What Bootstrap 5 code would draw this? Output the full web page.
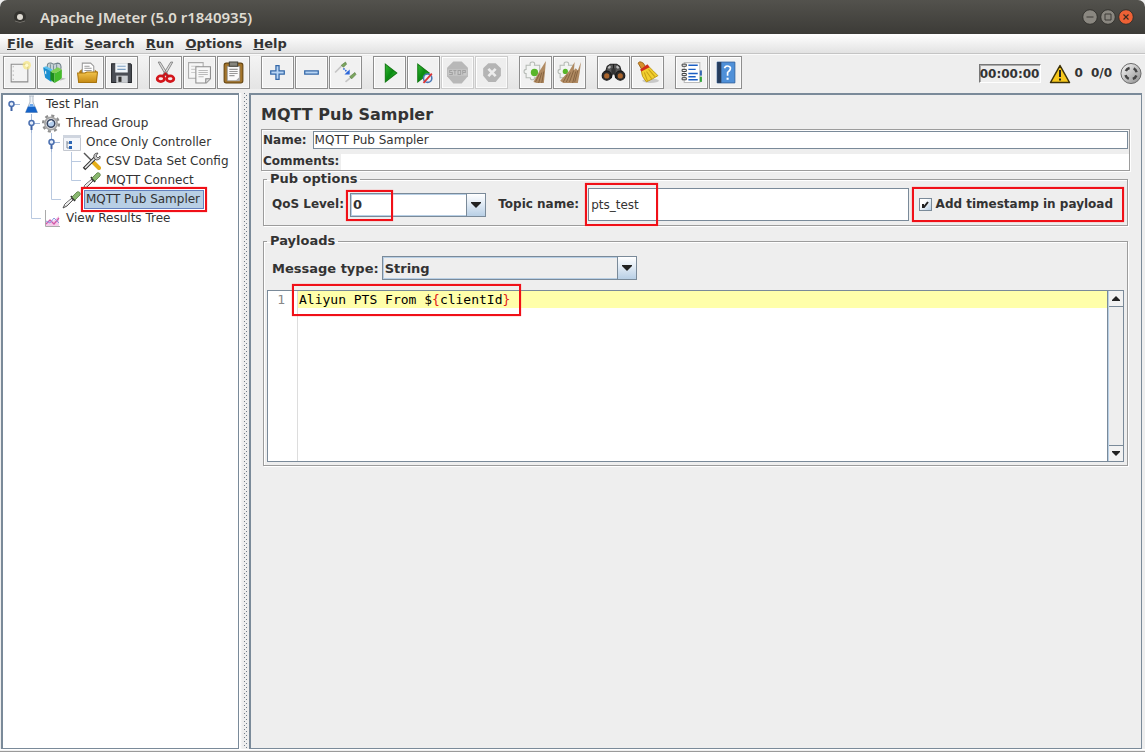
<!DOCTYPE html>
<html lang="en">
<head>
<meta charset="utf-8">
<meta name="viewport" content="width=device-width, initial-scale=1">
<title>Apache JMeter (5.0 r1840935)</title>
<link href="https://cdn.jsdelivr.net/npm/bootstrap@5.3.0/dist/css/bootstrap.min.css" rel="stylesheet">
<style>
:root{--edge:#7a8a99;--etch:#9c9c9c;--ink:#333;--mark:#f01018}
body{background:#eee;color:var(--ink);font:12px/17px "DejaVu Sans",sans-serif}
b,label,legend{font-weight:700}
svg{display:block;flex:none}
/* window title */
.titlebar{height:34px;background:linear-gradient(#53524d,#3c3b37);border-radius:7px 7px 0 0;color:#dfdbd2;padding:0 11px 0 13px}
.titlebar h1{font:600 15px/20px "Noto Sans",sans-serif;margin:0 0 0 13px}
.winbtn{border:0;background:none;padding:0;margin-left:2px}
/* menu */
.menubar{height:20px;background:linear-gradient(#fff,#e2e2e2);border-bottom:1px solid #c4c4c4;padding:1px 7px 0;gap:11px;font-size:13px}
.menubar a{color:var(--ink);font-weight:700;text-decoration:none;line-height:18px}
/* toolbar */
.tools{background:#eee;border-top:1px solid #fafafa;padding:1px 3px 4px 3px}
.toolstrip{gap:11px;background:linear-gradient(#f4f4f4,#e4e4e4)}
.toolset{gap:1px}
.tool{width:33px;height:33px;padding:3px;border:1px solid #8e8e8e;background:#f1f1f1;box-shadow:inset 1px 1px #fff,inset -1px -1px #fafafa;border-radius:0}
.tool:disabled{border-color:#ccc;background:#eee}
.tool svg{width:25px;height:25px}
.timer{width:62px;height:19px;border:1px solid;border-color:#777 #fff #fff #777;box-shadow:inset 1px 1px #aaa;background:#eee;padding:0;color:var(--ink);font-weight:700;text-align:center}
.gauge{gap:8px;padding-top:2px}
/* panes */
.tree{width:238px;border:solid var(--edge);border-width:2px 1px 1px 2px;background:#fff;margin-left:1px;flex:none}
.tree ul{padding:0;margin:0;list-style:none}
.tree li{height:19px;display:flex;align-items:center}
.tree li a{color:var(--ink);text-decoration:none;margin-left:5px;white-space:nowrap}
.tree li a.chosen{background:#b8cfe5;border:1px solid #6382bf;padding:0 3px 0 1px;margin-left:3px;position:relative}
.split{width:10px;flex:none;background:linear-gradient(90deg,#fff 1px,#eee 3px)}
.split i{display:block;height:100%;width:4px;margin-left:5px;background:url("data:image/svg+xml,%3Csvg xmlns='http://www.w3.org/2000/svg' width='4' height='4'%3E%3Cpath d='M0 0h1v1H0zM2 2h1v1H2z' fill='%236f7b88'/%3E%3C/svg%3E")}
.pane{border:solid var(--edge);border-width:2px 1px 1px 2px;margin-right:3px;padding:10px 11px 10px 10px;min-width:0}
.pane h2{font-size:16px;line-height:20px;font-weight:700;margin:0 0 4px}
.etched{border:1px solid var(--etch);box-shadow:1px 1px #fff,inset 1px 1px #fff}
.flat{border:1px solid var(--edge);background:#fff;color:var(--ink);border-radius:0;padding:0 1px;outline:0;min-width:0}
.namebox{padding:1px 0 0 1px}
.namebox .flat{height:18px;margin:0 1px 0 6px}
.namebox .plain{border:0;height:16px;margin:0 0 0 2px}
fieldset.etched{margin:0 2px 7px}
fieldset legend{float:none;width:auto;font-size:13px;line-height:16px;padding:0 3px;margin:0 0 0 3px}
.optrow{padding:0 3px 3px 8px}
.msgrow{padding:7px 3px 10px 8px;font-size:13px}
.combo{display:flex;border:1px solid var(--edge);height:24px;position:relative;box-shadow:inset 0 0 0 1px #b8cfe5;background:#eee;font-size:13px}
.combo.white{background:#fff;flex:0 0 16%;margin-left:6px}
.msgcombo{width:30%;margin-left:3px}
.combo select{appearance:none;border:0;background:none;flex:1;color:var(--ink);font-weight:700;padding:0 2px;outline:0;min-width:0}
.combo span{width:19px;border-left:1px solid var(--edge);background:linear-gradient(#fff,#dde8f3 50%,#b8cfe5);display:flex;align-items:center;justify-content:center;pointer-events:none}
.topiclabel{margin:0 9px 0 12px;white-space:nowrap}
.topicwrap{margin-right:3px}
.topicwrap .flat{height:33px;padding:0 2px}
.tick{appearance:none;width:13px;height:13px;border:1px solid var(--edge);background:linear-gradient(135deg,#fff 30%,#b8cfe5);margin:0}
.tick:checked{background:url("data:image/svg+xml,%3Csvg xmlns='http://www.w3.org/2000/svg' viewBox='0 0 11 11'%3E%3Cpath d='M3 5v3h1l4-5' fill='none' stroke='%23222' stroke-width='2'/%3E%3C/svg%3E"),linear-gradient(135deg,#fff 30%,#b8cfe5)}
/* red call-outs laid over the controls */
.callout{position:absolute;border:2px solid var(--mark);box-shadow:0 0 1px #f66;pointer-events:none}
.c-tree{inset:-4px}
.c-qos{inset:-4px auto -5px -5px;width:47px}
.c-topic{inset:-5px auto -5px -3px;width:73px}
.c-stamp{inset:0}
.c-code{inset:-7px auto -8px -6px;width:229px}
.stamp{position:relative;height:35px;padding:0 11px 0 7px;gap:4px;white-space:nowrap}
.editor{border:1px solid var(--edge);background:#fff;height:172px;font:13px/17px "DejaVu Sans Mono",monospace;margin:0 3px 3px}
.gutter{width:30px;border-right:1px solid #ddd;color:#888;text-align:right;padding-right:12px}
.code{min-width:0;color:#000}
.codeline{background:#ffffaa;padding-left:1px;height:17px;position:relative}
.brace{color:#e0201a}
.scroller{width:16px;border-left:1px solid var(--edge);background:#eee;box-shadow:inset 1px 0 #b8cfe5}
.scroller button{height:16px;border:0;border-bottom:1px solid var(--edge);background:#f2f2f2;padding:0 0 0 3px;margin-left:1px}
.scroller button:last-child{border-bottom:0;border-top:1px solid var(--edge)}
.bottomline{height:3px;border-top:1px solid #fff;border-bottom:1px solid #9a9a9a}
</style>
</head>
<body class="d-flex flex-column min-vh-100">
<svg width="0" height="0" class="position-absolute" aria-hidden="true">
<defs>
<linearGradient id="gGreen" x2="1" y2="1"><stop stop-color="#3b3"/><stop offset=".5" stop-color="#0a8a12"/><stop offset="1" stop-color="#3fd13f"/></linearGradient>
<linearGradient id="gFold" x2="0" y2="1"><stop stop-color="#f3c44c"/><stop offset="1" stop-color="#c58a13"/></linearGradient>
<linearGradient id="gSteel" x2="1" y2="1"><stop stop-color="#fafafa"/><stop offset="1" stop-color="#8b8b8b"/></linearGradient>
<symbol id="t-handle" viewBox="0 0 20 19"><path d="M10 9.5h9" stroke="#a3b8d8"/><path d="M10.500 9v7" stroke="#3f62a5" stroke-width="2"/><circle cx="10.500" cy="9" r="2.500" fill="#e6eefa" stroke="#4a6fb0" stroke-width="1.500"/></symbol>
<symbol id="t-handle2" viewBox="0 0 20 19"><path d="M10.500 0v19M10 9.500h9" stroke="#a3b8d8"/><path d="M10.500 9v7" stroke="#3f62a5" stroke-width="2"/><circle cx="10.500" cy="9" r="2.500" fill="#e6eefa" stroke="#4a6fb0" stroke-width="1.500"/></symbol>
<symbol id="t-bar" viewBox="0 0 20 19"><path d="M10.500 0v19" stroke="#b9c9e0"/></symbol>
<symbol id="t-tee" viewBox="0 0 20 19"><path d="M10.500 0v19M10 9.500h10" stroke="#b9c9e0"/></symbol>
<symbol id="t-elbow" viewBox="0 0 20 19"><path d="M10.500 0v9.500h9.500" stroke="#b9c9e0" fill="none"/></symbol>
<symbol id="i-gear" viewBox="0 0 20 20"><circle cx="10" cy="10" r="8.300" fill="none" stroke="#8f8f8f" stroke-width="2.600" stroke-dasharray="3.200 3.320"/><circle cx="10" cy="10" r="6.400" fill="#ececec" stroke="#a5a5a5" stroke-width="1.800"/><circle cx="10" cy="10" r="4" fill="#b5cfee" stroke="#3a4660" stroke-width="1.600"/><path d="M8 9.500a3 3 0 0 1 3-2" stroke="#fff" stroke-width="1.400" fill="none"/></symbol>
<symbol id="i-drop" viewBox="0 0 20 19"><path d="M2 18l2-4 7-6 1 2-6 6z" fill="#ddd" stroke="#444" stroke-width=".9"/><path d="M4 15l6-5" stroke="#fff"/><path d="M10 6l4 5" stroke="#333" stroke-width="1.800"/><path d="M11 7l5-5c2-1 4 1 3 3l-5 5z" fill="#8ab870" stroke="#54783f" stroke-width=".8"/></symbol>
<symbol id="i-bin" viewBox="0 0 24 24"><path d="M3 16l3-10 3-2h3v4l-2 9zM21 16l-3-10-3-2h-3v4l2 9z" fill="#555" stroke="#1d1d1d"/><path d="M7 8l2-2M15 6l2 2" stroke="#bbb" stroke-width="2"/><path d="M10 8h4v6h-4z" fill="#333"/><circle cx="5.500" cy="15" r="4.400" fill="#2b2b2b" stroke="#111"/><circle cx="18.500" cy="15" r="4.400" fill="#2b2b2b" stroke="#111"/><circle cx="5.500" cy="15.300" r="2.500" fill="#a9642c"/><circle cx="18.500" cy="15.300" r="2.500" fill="#a9642c"/></symbol>
<symbol id="i-puzzle" viewBox="0 0 24 24"><path d="M3 5h4q-1-3 2-3t2 3h5v12h-5q0 2-2 2t-2-2H3v-4q-2 0-2-2t2-2z" fill="#f2f4f2" stroke="#b5bab5"/></symbol>
<symbol id="i-arrow" viewBox="0 0 10 6"><path d="M0 0h10v1L5 6 0 1z" fill="#222"/></symbol>
</defs></svg>

<header class="titlebar d-flex align-items-center">
 <svg width="14" height="20" viewBox="0 0 14 20"><circle cx="7" cy="10" r="6" fill="#34332f"/><path d="M2 14q5 3 10 0" stroke="#73716b" fill="none"/><circle cx="7" cy="10" r="3" fill="#dedad2"/></svg>
 <h1 class="me-auto">Apache JMeter (5.0 r1840935)</h1>
 <button class="winbtn" aria-label="Minimize"><svg width="16" height="16" viewBox="0 0 16 16"><circle cx="8" cy="8" r="7.300" fill="#8a8780" stroke="#33322e"/><path d="M4.500 8h7" stroke="#3c3b37"/></svg></button>
 <button class="winbtn" aria-label="Maximize"><svg width="16" height="16" viewBox="0 0 16 16"><circle cx="8" cy="8" r="7.300" fill="#8a8780" stroke="#33322e"/><path d="M5 5h6v6H5z" fill="none" stroke="#3c3b37"/></svg></button>
 <button class="winbtn" aria-label="Close"><svg width="16" height="16" viewBox="0 0 16 16"><circle cx="8" cy="8" r="7.300" fill="#ee6135" stroke="#33322e"/><path d="M5.500 5.500l5 5m0-5l-5 5" stroke="#3c2b20" stroke-width="1.200"/></svg></button>
</header>

<nav class="menubar d-flex">
 <a href="#"><u>F</u>ile</a><a href="#"><u>E</u>dit</a><a href="#"><u>S</u>earch</a><a href="#"><u>R</u>un</a><a href="#"><u>O</u>ptions</a><a href="#"><u>H</u>elp</a>
</nav>

<div class="tools d-flex align-items-center">
 <div class="toolstrip d-flex me-auto">
  <div class="toolset d-flex">
   <button class="tool" aria-label="New"><svg viewBox="0 0 24 24"><path d="M4 4h16v17H4z" fill="#f3f3f3" stroke="#8c8c8c"/><path d="M6 6v13" stroke="#aaa" stroke-dasharray="1 3"/><circle cx="19" cy="5" r="4" fill="#f6e67c" opacity=".7"/><circle cx="19" cy="5" r="1.600" fill="#fffbd0"/></svg></button>
   <button class="tool" aria-label="Templates"><svg viewBox="0 0 24 24"><path d="M6 6q0-4 4-3l2 1 4-1q4 0 3 6v4H6z" fill="#c9d3d7" stroke="#71838a"/><path d="M9 4v6M12 5v5M15 4v5" stroke="#7b929a"/><path d="M2 7l8 3v11l-6-4z" fill="#1b8fd0"/><path d="M2 7l3-1 6 3-1 2z" fill="#5cc0ee"/><path d="M4 10l1 1v3l-1-1z" fill="#fff"/><path d="M9 11l4 2v9l-4-3z" fill="#1c8a1c"/><path d="M13 13l7-4v9l-7 4z" fill="#45bb2a"/><path d="M9 11l7-4 4 2-7 4z" fill="#7ed052"/><path d="M20 17l4 1-6 2z" fill="#bbb"/></svg></button>
   <button class="tool" aria-label="Open"><svg viewBox="0 0 24 24"><path d="M4 11l2-2h5v4h8V9l2 2v10H4z" fill="#b77d14"/><path d="M7 3h8l3 3v9H7z" fill="#fff" stroke="#999"/><path d="M9 6h5M9 8h7M9 10h7" stroke="#999"/><path d="M2.500 12.500h7l2-1h10v1l-1 9h-17z" fill="url(#gFold)" stroke="#a8740e"/></svg></button>
   <button class="tool" aria-label="Save"><svg viewBox="0 0 24 24"><path d="M2.500 3.500h18l1 1v17h-19z" fill="#4b4e55" stroke="#25272b"/><path d="M6 3h12v9H6z" fill="#f0f5f9"/><path d="M8 6h8M8 9h8" stroke="#7da0c4"/><path d="M7 15h11v7H7z" fill="#c9ccd0"/><path d="M9 16h3v5H9z" fill="#333"/></svg></button>
  </div>
  <div class="toolset d-flex">
   <button class="tool" aria-label="Cut"><svg viewBox="0 0 24 24"><path d="M5 2l2 0 8 13-2 1zM19 2l-2 0-8 13 2 1z" fill="#dedede" stroke="#777" stroke-width=".8"/><ellipse cx="7.500" cy="18" rx="3.500" ry="2.700" fill="#f4eaea" stroke="#d3151b" stroke-width="2.600"/><ellipse cx="16.500" cy="18" rx="3.500" ry="2.700" fill="#f4eaea" stroke="#d3151b" stroke-width="2.600"/><path d="M9 16l3-3 3 3" stroke="#c4151b" stroke-width="2" fill="none"/></svg></button>
   <button class="tool" aria-label="Copy"><svg viewBox="0 0 24 24"><path d="M1.500 2.500h14v15h-14z" fill="#f7f7f7" stroke="#aaa"/><path d="M4 6h8M4 9h4M4 12h4" stroke="#ccc"/><path d="M8.500 6.500h14V18l-4 4h-10z" fill="#f7f7f7" stroke="#8c8c8c"/><path d="M11 10h9M11 12h9M11 14h9M11 16h5" stroke="#bbb"/><path d="M22 18h-4v4" fill="#ddd" stroke="#888"/></svg></button>
   <button class="tool" aria-label="Paste"><svg viewBox="0 0 24 24"><rect x="3" y="3" width="18" height="19" rx="2" fill="#a3742a" stroke="#63430e"/><path d="M6 6h12v14H6z" fill="#fafafa" stroke="#888" stroke-width=".7"/><path d="M8 9h8M8 11h8M8 13h8M8 15h5" stroke="#999"/><path d="M8 2h8v4H8z" fill="#85857d" stroke="#44443d"/><path d="M18 16l-4 4h4z" fill="#aaa"/></svg></button>
  </div>
  <div class="toolset d-flex">
   <button class="tool" aria-label="Expand all"><svg viewBox="0 0 24 24"><path d="M10.500 5.500h3v5h5v3h-5v5h-3v-5h-5v-3h5z" fill="#b8d5f4" stroke="#3468a8" stroke-width="1.200"/></svg></button>
   <button class="tool" aria-label="Collapse all"><svg viewBox="0 0 24 24"><path d="M5.500 10.500h13v3h-13z" fill="#b8d5f4" stroke="#3468a8" stroke-width="1.200"/></svg></button>
   <button class="tool" aria-label="Toggle"><svg viewBox="0 0 24 24"><path d="M2 12l7-7" stroke="#c5c5c5" stroke-width="1.600"/><path d="M8 5l4-3 1 2-3 3z" fill="#7ba55d" stroke="#54783f" stroke-width=".6"/><path d="M12 21l5-4" stroke="#c5c5c5" stroke-width="1.600"/><path d="M16 16l5-4 1 2-4 4z" fill="#7ba55d" stroke="#54783f" stroke-width=".6"/><path d="M10 8l4 4" stroke="#2b66d9" stroke-width="1.500" stroke-dasharray="1.500 1"/><path d="M16 14h-5l5-5z" fill="#2b66d9"/></svg></button>
  </div>
  <div class="toolset d-flex">
   <button class="tool" aria-label="Start"><svg viewBox="0 0 24 24"><path d="M8 4l11 8.500-11 8.500z" fill="url(#gGreen)" stroke="#157a15"/></svg></button>
   <button class="tool" aria-label="Start no pauses"><svg viewBox="0 0 24 24"><path d="M6.500 4l11 8.500-11 8.500z" fill="url(#gGreen)" stroke="#157a15"/><circle cx="16" cy="17.500" r="4" fill="#e9eef8" stroke="#4a78b5" stroke-width="1.500"/><path d="M12 22l8-9" stroke="#d33" stroke-width="1.700"/></svg></button>
   <button class="tool" disabled aria-label="Stop"><svg viewBox="0 0 24 24"><path d="M8 1.500h8l6 6v8l-6 7H8l-6-7v-8z" fill="#b8b8b8"/><path d="M3 9h18v6H3z" fill="#c8c8c8"/><path d="M7 10H4.500v2H7v2H4M8 10h3M9.500 10v4M12.500 10h2.500v4h-2.500zM17 14v-4h2.500v2H17" fill="none" stroke="#a2a2a2"/></svg></button>
   <button class="tool" disabled aria-label="Shutdown"><svg viewBox="0 0 24 24"><path d="M9 3h7l5 5v7l-5 6H9l-5-6V8z" fill="#b4b4b4"/><path d="M9 8.500l7 7m0-7l-7 7" stroke="#ececec" stroke-width="2.500"/></svg></button>
  </div>
  <div class="toolset d-flex">
   <button class="tool" aria-label="Clear"><svg viewBox="0 0 24 24"><use href="#i-puzzle"/><circle cx="11" cy="12" r="3.500" fill="#58b62a"/><path d="M22 1l-7 11-5 9 3 1h7q1-9 2-21z" fill="#b08a62"/><path d="M16 13l-4 8M18 12l-3 10M20 11l-2 11" stroke="#7d5c39" stroke-width=".8"/></svg></button>
   <button class="tool" aria-label="Clear all"><svg viewBox="0 0 24 24"><use href="#i-puzzle"/><circle cx="8" cy="11" r="2.500" fill="#58b62a"/><path d="M17 2l-5 8-9 10 3 2h14q2-9 3-20l-3 8-2-2-2 2z" fill="#b08a62"/><path d="M10 14l-4 7M13 12l-4 9M16 10l-4 11M18 11l-3 11M20 10l-3 11" stroke="#7d5c39" stroke-width=".8"/></svg></button>
  </div>
  <div class="toolset d-flex">
   <button class="tool" aria-label="Search"><svg viewBox="0 0 24 24"><use href="#i-bin"/></svg></button>
   <button class="tool" aria-label="Reset search"><svg viewBox="0 0 24 24"><ellipse cx="15" cy="20" rx="8" ry="2" fill="#c8c8c8"/><path d="M3 3q1-2 3-1l2 1 3 5-4 2z" fill="#d7902c" stroke="#8f5b12" stroke-width=".8"/><path d="M6 10l7-4q5 5 9 9l-5 3-6 3q-5-5-5-11z" fill="#f2cf2e" stroke="#b58f10" stroke-width=".8"/><path d="M9 12l3 8M11 11l5 7M13 9l6 7" stroke="#c6a016"/><path d="M5 9l7-5 2 3-8 4z" fill="#d12b1c"/></svg></button>
  </div>
  <div class="toolset d-flex">
   <button class="tool" aria-label="Function helper"><svg viewBox="0 0 24 24"><path d="M5 2.500h15v19H5z" fill="#fff" stroke="#bbb"/><path d="M9 5h9M9 9h7M9 13h9M9 16h7M9 19h9" stroke="#1c5fc4" stroke-width="1.400"/><path d="M3 4h4v2H3zM3 9h4v2H3zM3 13h4v2H3zM3 17h4v2H3z" fill="#fff" stroke="#333" stroke-width=".9"/><path d="M20 10h2v5h-2z" fill="#3767b0"/><path d="M20 16h2v5h-2z" fill="#32a53a"/></svg></button>
   <button class="tool" aria-label="Help"><svg viewBox="0 0 24 24"><path d="M4 2h17v20H4z" fill="#4f90d8" stroke="#2a5d9b" stroke-width=".8"/><path d="M4 2h4v20H4z" fill="#273d5c"/><path d="M11 8q1-3 4-2 3 1 1 4l-2 2v3" fill="none" stroke="#fff" stroke-width="1.600"/><path d="M13 17h2v2h-2z" fill="#fff"/></svg></button>
  </div>
 </div>
 <div class="gauge d-flex align-items-center">
  <input class="timer" value="00:00:00" readonly aria-label="Elapsed time">
  <div class="d-flex align-items-center gap-1">
   <svg width="22" height="20" viewBox="0 0 22 20"><path d="M11 1.500L20.500 18.500h-19z" fill="#f7c81c" stroke="#3d3208" stroke-width="1.500" stroke-linejoin="round"/><path d="M11 6v7M11 14.500v2" stroke="#222" stroke-width="2"/></svg>
   <b>0</b>
  </div>
  <b>0/0</b>
  <svg width="22" height="23" viewBox="0 0 23 23"><circle cx="11.500" cy="11.500" r="10.500" fill="url(#gSteel)" stroke="#666"/><circle cx="11.500" cy="11.500" r="6" fill="none" stroke="#444" stroke-width="2.600" stroke-dasharray="5 4.420" stroke-dashoffset="-2.200"/></svg>
 </div>
</div>

<main class="d-flex flex-grow-1">
 <nav class="tree" aria-label="Test plan">
  <ul>
   <li><svg width="18" height="19" viewBox="2 0 18 19"><use href="#t-handle" width="20" height="19"/></svg><svg width="20" height="19" viewBox="0 0 20 19"><path d="M8 1h5M9 1v6L4.500 17.500h12L12 7V1" fill="#edf2f7" stroke="#b2bcc8"/><path d="M7 11.500h7l2.500 6H4.500z" fill="#1463c8"/><path d="M9 9h3l1 3H8z" fill="#6da7ea"/></svg><a href="#">Test Plan</a></li>
   <li><svg width="18" height="19"></svg><svg width="20" height="19"><use href="#t-handle2"/></svg><svg width="20" height="19"><use href="#i-gear"/></svg><a href="#">Thread Group</a></li>
   <li><svg width="18" height="19"></svg><svg width="20" height="19"><use href="#t-bar"/></svg><svg width="20" height="19"><use href="#t-handle2"/></svg><svg width="20" height="19" viewBox="0 0 20 19"><path d="M2.500 2.500h17v15h-17z" fill="#f4f6fa" stroke="#c4c8d0"/><path d="M2 2h18v3H2z" fill="#cfd5df"/><path d="M6 8v7h3M6 10h3" stroke="#7a8797" fill="none"/><path d="M8 8h3v3H8zM8 13h3v3H8z" fill="#2a64b4"/></svg><a href="#">Once Only Controller</a></li>
   <li><svg width="18" height="19"></svg><svg width="20" height="19"><use href="#t-bar"/></svg><svg width="20" height="19"><use href="#t-bar"/></svg><svg width="20" height="19"><use href="#t-tee"/></svg><svg width="20" height="19" viewBox="0 0 20 19"><path d="M3 1l8 8" stroke="#555" stroke-width="1.500"/><path d="M12 10l6 6" stroke="#e5ae18" stroke-width="4" stroke-linecap="round"/><path d="M3 17L14 6" stroke="#333" stroke-width="3.500"/><path d="M4 16L14 6" stroke="#eee" stroke-width="1.600"/><path d="M17 1q-5 0-4 5l2 2q5 0 4-4l-2 2-2-2z" fill="#c9c9c9" stroke="#444" stroke-width=".8"/></svg><a href="#">CSV Data Set Config</a></li>
   <li><svg width="18" height="19"></svg><svg width="20" height="19"><use href="#t-bar"/></svg><svg width="20" height="19"><use href="#t-bar"/></svg><svg width="20" height="19"><use href="#t-elbow"/></svg><svg width="20" height="19"><use href="#i-drop"/></svg><a href="#">MQTT Connect</a></li>
   <li><svg width="18" height="19"></svg><svg width="20" height="19"><use href="#t-bar"/></svg><svg width="20" height="19"><use href="#t-elbow"/></svg><svg width="20" height="19"><use href="#i-drop"/></svg><a href="#" class="chosen">MQTT Pub Sampler<span class="callout c-tree"></span></a></li>
   <li><svg width="18" height="19"></svg><svg width="20" height="19"><use href="#t-elbow"/></svg><svg width="20" height="19" viewBox="0 0 20 19"><path d="M4.500 1v16.500H19" stroke="#aaa" fill="none"/><path d="M5 13l4-3 3 2 6-5v10H5z" fill="#f4cbe8"/><path d="M5 15l4-4 4 4 5-6" fill="none" stroke="#d158a8" stroke-width="1.200"/><path d="M5 12l4 2 4-5 5 5" fill="none" stroke="#8b9be0"/></svg><a href="#">View Results Tree</a></li>
  </ul>
 </nav>
 <div class="split"><i></i></div>
 <section class="pane flex-grow-1">
  <h2>MQTT Pub Sampler</h2>
  <div class="etched namebox">
   <div class="d-flex align-items-center"><label for="nm">Name:</label><input id="nm" class="flat flex-grow-1" value="MQTT Pub Sampler"></div>
   <div class="d-flex align-items-center mt-1"><label for="cm">Comments:</label><input id="cm" class="flat plain flex-grow-1"></div>
  </div>
  <fieldset class="etched">
   <legend>Pub options</legend>
   <div class="optrow d-flex align-items-center">
    <label for="qos">QoS Level:</label>
    <div class="combo white"><select id="qos"><option>0</option><option>1</option><option>2</option></select><span><svg width="10" height="6"><use href="#i-arrow"/></svg></span><div class="callout c-qos"></div></div>
    <label for="topic" class="topiclabel">Topic name:</label>
    <div class="topicwrap position-relative d-flex flex-grow-1"><input id="topic" class="flat w-100" value="pts_test"><div class="callout c-topic"></div></div>
    <div class="stamp d-flex align-items-center"><input class="tick" type="checkbox" id="ts" checked><label for="ts">Add timestamp in payload</label><div class="callout c-stamp"></div></div>
   </div>
  </fieldset>
  <fieldset class="etched">
   <legend>Payloads</legend>
   <div class="msgrow d-flex align-items-center">
    <label for="mt">Message type:</label>
    <div class="combo msgcombo"><select id="mt"><option>String</option><option>Hex string</option></select><span><svg width="10" height="6"><use href="#i-arrow"/></svg></span></div>
   </div>
   <div class="editor d-flex">
    <div class="gutter">1</div>
    <div class="code flex-grow-1"><div class="codeline"><span contenteditable="true" role="textbox" aria-multiline="true" aria-label="Payload" spellcheck="false">Aliyun PTS From $<span class="brace">{</span>clientId<span class="brace">}</span></span><div class="callout c-code"></div></div></div>
    <div class="scroller d-flex flex-column justify-content-between"><button aria-label="Scroll up"><svg width="8" height="5" viewBox="0 0 10 6"><path d="M0 6h10V5L5 0 0 5z" fill="#222"/></svg></button><button aria-label="Scroll down"><svg width="8" height="5"><use href="#i-arrow"/></svg></button></div>
   </div>
  </fieldset>
 </section>
</main>
<div class="bottomline"></div>
<script src="https://cdn.jsdelivr.net/npm/bootstrap@5.3.0/dist/js/bootstrap.bundle.min.js"></script>
</body>
</html>
